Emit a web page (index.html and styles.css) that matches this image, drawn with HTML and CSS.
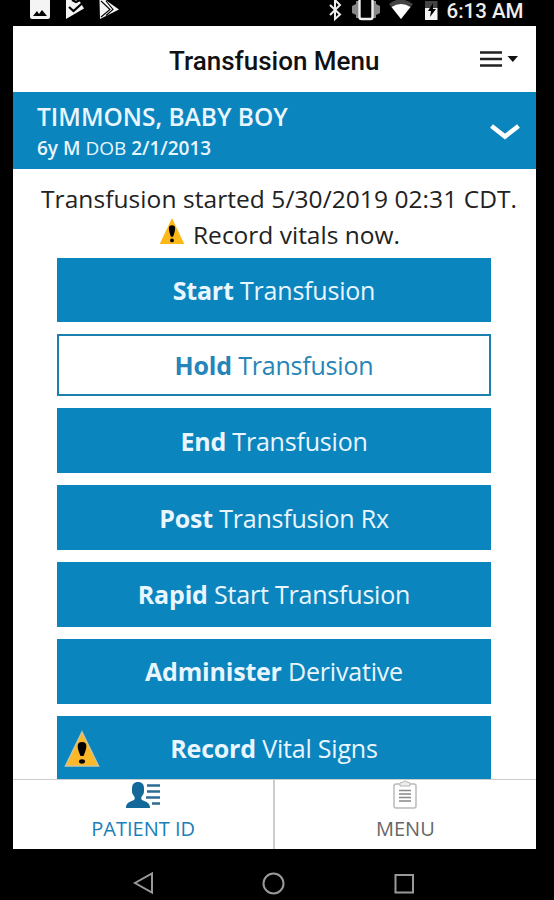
FILE: index.html
```html
<!DOCTYPE html>
<html lang="en">
<head>
  <meta charset="UTF-8" />
  <meta name="viewport" content="width=device-width, initial-scale=1.0" />
  <title>Transfusion Menu</title>
  <link rel="stylesheet" href="styles.css">
</head>
<body>
  <div class="status-bar">
    <svg class="status-left" width="92" height="22" viewBox="0 0 92 22">
      <path fill="#f4f4f4" fill-rule="evenodd" d="M0 0h20v17q0 2-2 2H2q-2 0-2-2zM3 16h14l-5-6-3 4-2-3z"/>
      <path fill="#f4f4f4" d="M36 0h13l5 8.500L36 19z"/>
      <path fill="none" stroke="#000" stroke-width="2.200" d="M39 7l4.500 4L53 2.500M42 0l4 2 4-2"/>
      <path fill="#f4f4f4" d="M69.500 0h6L89 9.500 70 19z"/>
      <path fill="none" stroke="#000" stroke-width="1.100" d="M71 1l9 8.500L71 17M76 1l7 8.500-7 6"/>
    </svg>
    <svg class="status-right" width="110" height="22" viewBox="0 0 110 22">
      <path fill="none" stroke="#eee" stroke-width="2" d="M2 5l10 9.500-5 4.500V0l5 5L2 15"/>
      <path fill="#888" d="M28 1h20v3l4 2v7l-4 2v3H28v-3l-4-2V6l4-2z"/>
      <rect x="31.500" y="-2" width="13" height="21" rx="2" fill="#000" stroke="#eee" stroke-width="2.400"/>
      <path fill="#444" d="M61 4q11-9 24 0L73 19z"/>
      <path fill="#fff" d="M63.500 7q9.500-6 19 0L73 19z"/>
      <path fill="#444" d="M97 1h12.500v8H97z"/>
      <path fill="#f4f4f4" d="M97 8h12.500v12H97z"/>
      <path fill="#000" d="M105 3l-5 8h3l-1 6 6-8h-3z"/>
    </svg>
    <span class="clock">6:13 AM</span>
  </div>

  <div class="app">
    <header class="title-bar">
      <h1>Transfusion Menu</h1>
      <svg class="menu-icon" width="38" height="16" viewBox="0 0 38 16">
        <path stroke="#222" stroke-width="2.600" d="M0 1.500h22M0 8h22M0 14.500h22"/>
        <path fill="#111" d="M27.500 5H38l-5.200 6z"/>
      </svg>
    </header>

    <section class="patient">
      <div>
        <div class="patient-name">TIMMONS, BABY BOY</div>
        <div class="patient-info"><b>6y M</b> DOB <b>2/1/2013</b></div>
      </div>
      <svg class="chevron" width="30" height="18" viewBox="0 0 30 18">
        <path fill="none" stroke="#fff" stroke-width="4.600" d="M1.500 3L15 13.500 28.500 3"/>
      </svg>
    </section>

    <main class="content">
      <div class="message">
        <div class="started">Transfusion started 5/30/2019 02:31 CDT.</div>
        <div class="vitals">
          <svg width="26" height="28" viewBox="0 0 36 38">
            <path fill="#fdb817" d="M18 1l17 36H1z"/>
            <path d="M18 11c6 0 5 6 1.500 16h-3C13 17 12 11 18 11z"/>
            <circle cx="18" cy="32" r="2.600"/>
          </svg>
          <span>Record vitals now.</span>
        </div>
      </div>
      <div class="buttons">
        <div class="btn"><span><b>Start</b> Transfusion</span></div>
        <div class="btn outline"><span><b>Hold</b> Transfusion</span></div>
        <div class="btn"><span><b>End</b> Transfusion</span></div>
        <div class="btn"><span><b>Post</b> Transfusion Rx</span></div>
        <div class="btn"><span><b>Rapid</b> Start Transfusion</span></div>
        <div class="btn"><span><b>Administer</b> Derivative</span></div>
        <div class="btn">
          <svg class="warn" width="36" height="38" viewBox="0 0 36 38">
            <path fill="#fdb827" stroke="#c9c5a0" stroke-width="1.500" d="M18 2l16.500 34h-33z"/>
            <path d="M18 12c6 0 5 6 1.500 14h-3C13 18 12 12 18 12z"/>
            <ellipse cx="18" cy="31.500" rx="3" ry="2.200"/>
          </svg>
          <span><b>Record</b> Vital Signs</span>
        </div>
      </div>
    </main>

    <nav class="tabs">
      <div class="tab active">
        <svg width="34" height="28" viewBox="0 0 34 28">
          <path fill="#12699a" d="M0 27c0-5 3-6 8-8 1-1 1-2 0-4-2-2-2-4-2-7 0-5 2-7 6-7s6 2 6 7c0 3 0 5-2 7-1 2-1 3 0 4 5 2 8 3 8 8z"/>
          <path stroke="#2c6c94" stroke-width="2.400" d="M21 4.500h13M21 10.500h13M20 16.500h14M26 22.500h8"/>
        </svg>
        <span>PATIENT ID</span>
      </div>
      <div class="tab">
        <svg width="24" height="30" viewBox="0 0 24 30">
          <path fill="none" stroke="#bbb" stroke-width="1.500" d="M7 4H3Q1 4 1 6v20q0 2 2 2h18q2 0 2-2V6q0-2-2-2h-4"/>
          <path fill="#eee" stroke="#b5b5b5" d="M7 6V3l3-1q2-2 4 0l3 1v3z"/>
          <path stroke="#888" stroke-width="1.700" d="M6 10.500h12M6 14h12M6 17.500h12M6 21h12"/>
        </svg>
        <span>MENU</span>
      </div>
    </nav>
  </div>

  <div class="nav-bar">
    <svg width="290" height="28" viewBox="0 0 290 28">
      <g fill="none" stroke="#999" stroke-width="2">
        <path d="M19 4.500v19L2 14z"/>
        <circle cx="140.500" cy="14.500" r="10"/>
        <rect x="262.500" y="6" width="17.500" height="17.500"/>
      </g>
    </svg>
  </div>
</body>
</html>
```

FILE: styles.css
```css
body {
  margin: 0;
  height: 900px;
  background: #000;
  font-family: "Open Sans", "Noto Sans", sans-serif;
  overflow: hidden;
}
.status-bar {
  display: flex;
  height: 26px;
  padding-left: 30px;
  color: #eee;
}
.status-right {
  margin-left: 206px;
}
.clock {
  margin-left: 8.5px;
  font: 500 20.5px/22px Roboto, sans-serif;
  white-space: nowrap;
}
.app {
  display: flex;
  flex-direction: column;
  width: 522.5px;
  height: 823px;
  margin-left: 13px;
  background: #fff;
}
.title-bar {
  display: flex;
  flex: none;
  align-items: center;
  height: 66px;
}
.title-bar h1 {
  flex: 1;
  margin: 0;
  padding-left: 156px;
  font: 500 26px/66px Roboto, sans-serif;
  color: #111;
  padding-top: 3px;
}
.menu-icon {
  margin-right: 18px;
}
.patient {
  display: flex;
  flex: none;
  justify-content: space-between;
  height: 77px;
  padding: 0 16px 0 24px;
  background: #0b85be;
  color: #eaf6ff;
}
.patient-name {
  padding-top: 8px;
  font-size: 24.5px;
  font-weight: 600;
  line-height: 34px;
}
.patient-info {
  font-size: 19px;
  line-height: 28px;
}
.patient-info b {
  font-weight: 600;
}
.chevron {
  margin-top: 31px;
}
.content {
  flex: 1;
  min-height: 0;
  overflow: hidden;
}
.message {
  height: 76.6px;
  padding-top: 12px;
  color: #222;
  font-size: 24.5px;
  line-height: 36px;
  white-space: nowrap;
}
.started {
  padding-left: 28px;
  letter-spacing: 0.07px;
}
.vitals {
  display: flex;
  padding-left: 146px;
  gap: 8px;
}
.buttons {
  display: flex;
  flex-direction: column;
  gap: 12px;
  width: 434px;
  margin-left: 44px;
}
.btn {
  position: relative;
  display: flex;
  align-items: center;
  justify-content: center;
  height: 64.8px;
  background: #0b85be;
  color: #eaf6ff;
  font-size: 25px;
  letter-spacing: -0.2px;
  white-space: nowrap;
}
.btn b {
  font-weight: 700;
}
.btn.outline {
  box-sizing: border-box;
  height: 62px;
  border: 2px solid #1b7fb0;
  background: #fff;
  color: #2585b8;
}
.warn {
  position: absolute;
  left: 7px;
  top: 14px;
}
.tabs {
  display: flex;
  flex: none;
  height: 69px;
  border-top: 1px solid #ccc;
}
.tab {
  display: flex;
  flex: 1;
  flex-direction: column;
  align-items: center;
  color: #666;
  font: 400 20px/28px "Open Sans", sans-serif;
}
.tab.active {
  border-right: 2px solid #ccc;
  color: #1a80b8;
}
.tab svg {
  height: 30px;
  margin-bottom: 5px;
}
.nav-bar {
  display: flex;
  height: 51px;
  padding: 20px 0 0 133px;
  box-sizing: border-box;
}
```
